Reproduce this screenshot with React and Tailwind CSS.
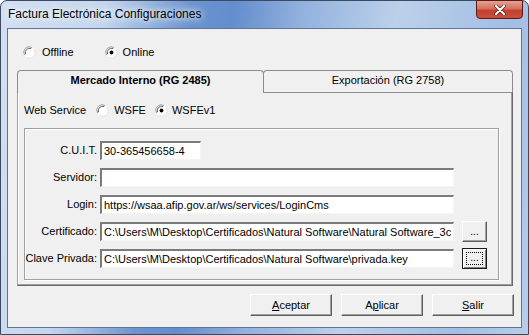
import React from "react";

const Radio = ({ checked }) => (
  <svg width="13" height="13" viewBox="0 0 13 13" className="shrink-0">
    <circle cx="6.5" cy="6.5" r="5.5" fill="#fff" />
    <path d="M1.5 9 A5.5 5.5 0 0 1 9 1.5" fill="none" stroke="#9a9a9a" strokeWidth="1" />
    <path d="M2.6 8.2 A4.3 4.3 0 0 1 8.2 2.6" fill="none" stroke="#5f5f5f" strokeWidth="1" />
    <path d="M11.5 4 A5.5 5.5 0 0 1 4 11.5" fill="none" stroke="#e3e3e3" strokeWidth="1" />
    {checked && <circle cx="6.5" cy="6.5" r="1.9" fill="#000" />}
  </svg>
);

const Field = ({ label, value, width = "w-[354px]", browse, focused }) => (
  <div className="flex items-center h-[19px]">
    <span className="w-[72px] shrink-0 flex justify-end whitespace-nowrap leading-none">{label}</span>
    <div
      className={`ml-[3px] h-[19px] ${width} shrink-0 bg-white border-t-2 border-l-2 border-t-[#7b7b7b] border-l-[#7b7b7b] border-b border-r border-b-[#f4f4f4] border-r-[#f4f4f4] flex items-center pl-[2px] overflow-hidden whitespace-nowrap`}
    >
      {value}
    </div>
    {browse && (
      <div
        className={`ml-[8px] w-[25px] h-[21px] bg-[#f0f0f0] flex items-center justify-center ${
          focused
            ? "border border-[#1a1a1a] shadow-[inset_1px_1px_0_#fff,inset_-1px_-1px_0_#808080]"
            : "border border-t-white border-l-white border-b-[#5f5f5f] border-r-[#5f5f5f] shadow-[inset_-1px_-1px_0_#a0a0a0]"
        }`}
      >
        <div className={`w-[17px] h-[13px] flex items-end justify-center pb-[1px] leading-none text-[10px] ${focused ? "border border-dotted border-black" : ""}`}>
          ...
        </div>
      </div>
    )}
  </div>
);

const Btn = ({ children }) => (
  <div className="w-[82px] h-[22px] bg-[#f0f0f0] border border-t-white border-l-white border-b-[#5f5f5f] border-r-[#5f5f5f] shadow-[inset_-1px_-1px_0_#a0a0a0] flex items-center justify-center leading-none">
    {children}
  </div>
);

export default function App() {
  return (
    <div className="w-[529px] h-[335px] font-['Liberation_Sans',Arial,sans-serif] text-[11px] text-black">
      <div className="w-full h-full rounded-t-[7px] border border-[#3b4a60] bg-[linear-gradient(100deg,#d3e0f2_0%,#c4d6ee_18%,#6b94d0_33%,#638dcc_40%,#93b2df_52%,#bcd0ea_68%,#a2bee3_88%,#b8cdea_100%)] flex flex-col">
        <div className="h-[27px] flex items-start shrink-0">
          <span className="ml-[7px] mt-[7px] text-[12px] leading-none [text-shadow:0_0_6px_#fff,0_0_10px_#fff]">
            Factura Electrónica Configuraciones
          </span>
          <div className="ml-auto mr-[5px] -mt-px w-[47px] h-[19px] rounded-b-[4px] border border-[#5a1c16] bg-[linear-gradient(to_bottom,#e3a293_0%,#d6705f_45%,#c2402f_55%,#c9503d_100%)] flex items-center justify-center">
            <svg width="12" height="10" viewBox="0 0 12 10">
              <path d="M2 1 L10 9 M10 1 L2 9" stroke="#3a1410" strokeWidth="3.4" strokeLinecap="round" />
              <path d="M2 1 L10 9 M10 1 L2 9" stroke="#fff" strokeWidth="2.2" strokeLinecap="round" />
            </svg>
          </div>
        </div>

        <div className="mx-[6px] mb-[6px] flex-1 border border-[#5f7493] bg-[#f0f0f0] flex flex-col">
          <div className="mt-[16px] ml-[15px] h-[14px] flex items-center">
            <Radio />
            <span className="ml-[6px]">Offline</span>
            <div className="ml-[31px] flex items-center">
              <Radio checked />
              <span className="ml-[5px]">Online</span>
            </div>
          </div>

          <div className="mt-[11px] ml-[9px] w-[496px] flex flex-col">
            <div className="flex items-end h-[22px]">
              <div className="relative z-10 w-[247px] h-[23px] -mb-px bg-[#f0f0f0] rounded-t-[4px] border border-b-0 border-[#8c8c8c] flex items-center justify-center font-bold pb-[3px]">
                Mercado Interno (RG 2485)
              </div>
              <div className="-ml-px w-[250px] h-[22px] bg-[#f0f0f0] rounded-t-[4px] border border-b-0 border-[#8c8c8c] flex items-center justify-center pb-[3px]">
                Exportación (RG 2758)
              </div>
            </div>

            <div className="h-[194px] border border-t-[#8c8c8c] border-l-[#a0a0a0] border-b-[#696969] border-r-[#696969] shadow-[inset_-1px_-1px_0_#a0a0a0,inset_1px_0_0_#fff] flex flex-col">
              <div className="mt-[10px] ml-[6px] h-[14px] flex items-center">
                <span>Web Service</span>
                <div className="ml-[10px] flex items-center">
                  <Radio />
                  <span className="ml-[5px]">WSFE</span>
                </div>
                <div className="ml-[9px] flex items-center">
                  <Radio checked />
                  <span className="ml-[4px]">WSFEv1</span>
                </div>
              </div>

              <div className="mt-[11px] ml-[6px] w-[475px] h-[152px] border border-[#a0a0a0] shadow-[inset_1px_1px_0_#fff,1px_1px_0_#fff] pt-[12px] flex flex-col gap-[8px]">
                <Field label="C.U.I.T." value="30-365456658-4" width="w-[101px]" />
                <Field label="Servidor:" value="" />
                <Field label="Login:" value="https://wsaa.afip.gov.ar/ws/services/LoginCms" />
                <Field
                  label="Certificado:"
                  value="C:\Users\M\Desktop\Certificados\Natural Software\Natural Software_3c"
                  browse
                />
                <Field
                  label="Clave Privada:"
                  value="C:\Users\M\Desktop\Certificados\Natural Software\privada.key"
                  browse
                  focused
                />
              </div>
            </div>
          </div>

          <div className="mt-[8px] mr-[7px] flex justify-end gap-[9px]">
            <Btn><span><span className="underline">A</span>ceptar</span></Btn>
            <Btn><span>A<span className="underline">p</span>licar</span></Btn>
            <Btn><span><span className="underline">S</span>alir</span></Btn>
          </div>
        </div>
      </div>
    </div>
  );
}
